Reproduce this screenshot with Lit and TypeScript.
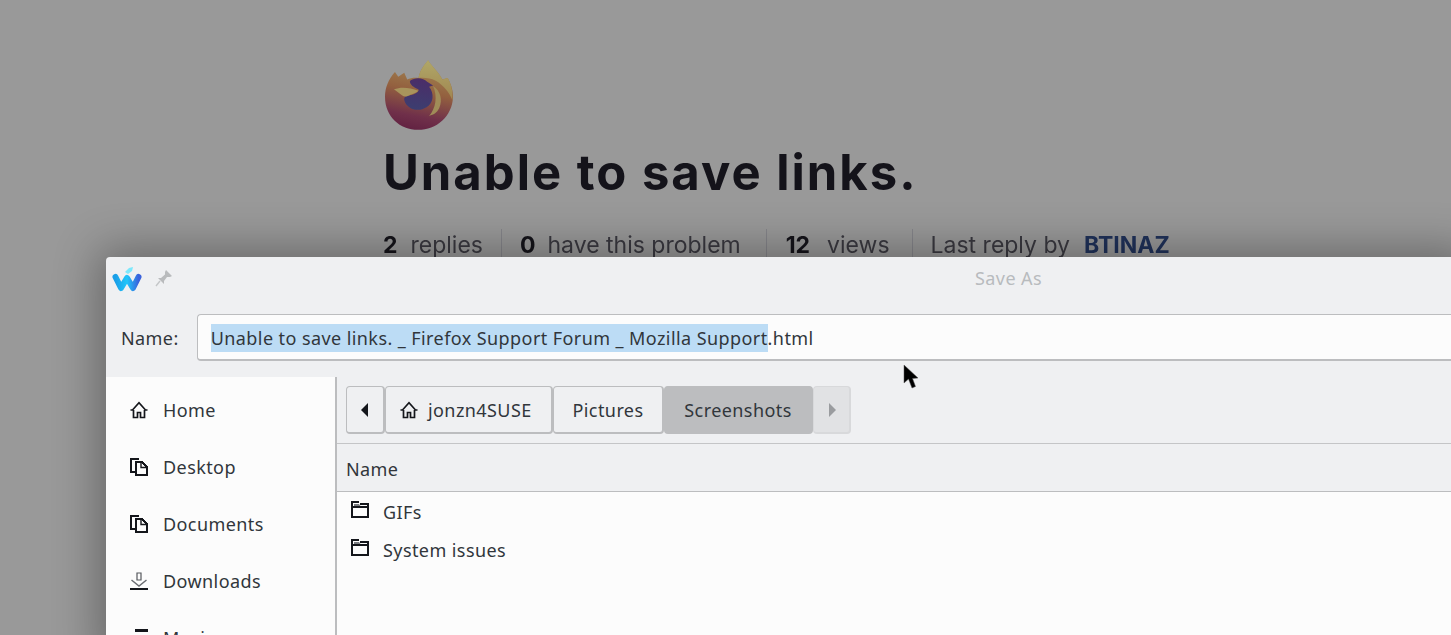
import { LitElement, html, css, svg } from "lit";
import { customElement } from "lit/decorators.js";

const homeIcon = svg`<path d="M0.500 9 H2.500 L9 1.800 L15.500 9 H17.500 M3.500 9 V16.500 H7.500 V11.500 H10.500 V16.500 H14.500 V9" fill="none" stroke="#14161b" stroke-width="1.700"/>`;
const docIcon = svg`<g shape-rendering="crispEdges"><path d="M6 14 H1 V1 H9" fill="none" stroke="#14161b" stroke-width="2"/><path d="M6 3.500 H11.500 L17 9 V17 H6 Z" fill="none" stroke="#14161b" stroke-width="2"/></g><path d="M11 4 V9.500 H16.500" fill="none" stroke="#14161b" stroke-width="1.400"/>`;
const dlIcon = svg`<path d="M7 1 H11 V8 H7 Z" fill="none" stroke="#55585d" stroke-width="1.200"/><path d="M1.500 8 L9 14 L16.500 8" fill="none" stroke="#6a6d72" stroke-width="1.500"/><path d="M0 17 H18" stroke="#14161b" stroke-width="2" shape-rendering="crispEdges"/>`;
const folderIcon = svg`<g shape-rendering="crispEdges"><path d="M1 6 H17 V16 H1 Z M1 6 V1 H8 M17 6 V3 H9" fill="none" stroke="#14161b" stroke-width="2"/></g><path d="M3 3 H8 L9.500 5 H3 Z" fill="#7a7c80"/>`;
const musicIcon = svg`<path d="M5 0 H18 V3 H5 Z" fill="#14161b"/>`;

@customElement("app-root")
export class AppRoot extends LitElement {
  static styles = css`
    :host {
      display: block;
      width: 1451px;
      height: 635px;
      overflow: hidden;
      position: relative;
      background: #999999;
      font-family: "Noto Sans", sans-serif;
    }
    .page {
      padding: 60px 0 0 383px;
      color: #15141a;
      filter: blur(0.35px);
    }
    .logo { display: block; width: 68px; height: 70px; margin-left: 2px; }
    h1 {
      margin: 11px 0 0;
      font: 700 49px/64px "Inter", sans-serif;
      letter-spacing: 2px;
      white-space: nowrap;
      color: #14131a;
    }
    .stats {
      display: flex;
      margin-top: 24px;
      font: 400 23px/32px "Inter", sans-serif;
      color: #3a3940;
      white-space: nowrap;
    }
    .stat {
      padding-right: 18px;
      margin-right: 18px;
      border-right: 1px solid #85858a;
    }
    .stat:nth-child(2) { padding-right: 25px; margin-right: 19px; }
    .stat:nth-child(3) { padding-right: 22px; }
    .stat:last-child { border: 0; }
    .stat b { color: #15141a; font-weight: 700; margin-right: 13px; }
    .stat:nth-child(2) b { margin-right: 12px; }
    .stat:nth-child(3) b { margin-right: 17px; }
    .stat .user { color: #20325a; margin-left: 14px; margin-right: 0; }

    .window {
      position: absolute;
      left: 106px;
      top: 257px;
      width: 1360px;
      height: 400px;
      background: #eff0f2;
      border-radius: 4px 4px 0 0;
      box-shadow: 0 0 45px 8px rgba(0, 0, 0, 0.32);
      color: #31363b;
      font-size: 18px;
      letter-spacing: 0.42px;
    }
    .titlebar {
      height: 44px;
      display: flex;
      align-items: center;
      padding-left: 6px;
      position: relative;
    }
    .titlebar svg { display: block; }
    .pin { margin-left: 13px; margin-top: -2px; }
    .wintitle {
      position: absolute;
      left: 869px;
      top: 9px;
      color: #b8bbbe;
      font-size: 18px;
      line-height: 25px;
    }
    .namerow {
      height: 76px;
      display: flex;
      align-items: flex-start;
      padding-left: 15px;
    }
    .namerow label { line-height: 74px; margin-right: 18px; }
    .field {
      margin-top: 13px;
      flex: 1;
      height: 47px;
      box-sizing: border-box;
      background: #fcfcfc;
      border: 1px solid #bcbdbf;
      border-right: 0;
      border-bottom-width: 2px;
      border-radius: 4px 0 0 4px;
      padding: 9px 0 0 13px;
      line-height: 28px;
      white-space: nowrap;
    }
    .sel { background: #bcdcf5; display: inline-block; }
    .body { display: flex; height: 280px; }
    .side {
      width: 205px;
      background: #fcfcfc;
      border-right: 2px solid #bcbdbf;
      padding: 4px 0 0 24px;
      flex: none;
    }
    .place {
      display: flex;
      align-items: center;
      gap: 15px;
      height: 57px;
    }
    .place svg { width: 18px; height: 18px; flex: none; }
    .main { flex: 1; display: flex; flex-direction: column; }
    .crumbs {
      height: 67px;
      flex: none;
      display: flex;
      align-items: center;
      box-sizing: border-box;
      padding: 0 0 0 9px;
      border-bottom: 1px solid #c4c5c7;
    }
    .btn {
      height: 48px;
      box-sizing: border-box;
      border: 1px solid #bcbdbf;
      border-bottom-width: 2px;
      border-right-width: 2px;
      border-radius: 4px;
      display: flex;
      align-items: center;
      justify-content: center;
      background: #eff0f2;
      flex: none;
    }
    .arrow { width: 39px; }
    .home { width: 168px; justify-content: flex-start; padding-left: 14px; gap: 10px; }
    .pics { width: 111px; }
    .shots { width: 149px; background: #bcbdbf; border-color: #bcbdbf; }
    .next { width: 38px; background: #e1e2e4; border-color: #d8d9db; }
    .btn svg { display: block; }
    .head {
      height: 48px;
      flex: none;
      box-sizing: border-box;
      border-bottom: 1px solid #bcbdbf;
      padding-left: 9px;
      line-height: 50px;
    }
    .list { flex: 1; background: #fcfcfc; padding-top: 1px; }
    .row {
      display: flex;
      align-items: center;
      gap: 14px;
      height: 38px;
      padding-left: 14px;
    }
    .row svg { width: 18px; height: 18px; margin-top: -4px; flex: none; }
    .cursor { position: absolute; left: 903px; top: 364px; width: 17px; height: 25px; }
  `;

  render() {
    return html`
      <div class="page">
        <svg class="logo" viewBox="45 30 205 210" aria-hidden="true">
          <defs>
            <linearGradient id="fx" x1="0.6" y1="0" x2="0.4" y2="1">
              <stop offset="0" stop-color="#a38b55"/>
              <stop offset="0.45" stop-color="#93603f"/>
              <stop offset="0.8" stop-color="#70304a"/>
              <stop offset="1" stop-color="#622242"/>
            </linearGradient>
            <linearGradient id="glb" x1="0.5" y1="0" x2="0.4" y2="1">
              <stop offset="0" stop-color="#4b2d68"/>
              <stop offset="1" stop-color="#3c3e70"/>
            </linearGradient>
            <linearGradient id="fl" x1="0.5" y1="0" x2="0.5" y2="1">
              <stop offset="0" stop-color="#b0a768"/>
              <stop offset="1" stop-color="#a08650"/>
            </linearGradient>
          </defs>
          <path d="M175 30 C185 48 205 62 218 88 L234 84 C246 105 250 125 250 140 C248 200 200 240 145 240 C90 240 45 200 45 140 C45 115 55 88 75 66 L85 80 L103 68 L112 88 C122 84 135 82 146 84 C150 62 160 48 175 30 Z" fill="url(#fx)"/>
          <path d="M175 30 C185 48 205 62 218 88 L234 84 C246 105 250 125 248 150 C240 130 222 105 198 92 C182 84 162 82 146 84 C150 62 160 48 175 30 Z" fill="url(#fl)"/>
          <path d="M190 108 C212 122 220 150 208 176 C200 190 192 194 178 198 C198 176 204 140 190 108 Z" fill="#a08c58"/>
          <path d="M120 93 C135 80 160 82 172 95 L190 106 L178 110 C194 130 192 160 170 172 C145 188 110 178 103 150 C102 140 110 136 125 135 C140 132 150 122 145 118 C132 112 120 105 120 93 Z" fill="url(#glb)"/>
          <path d="M72 118 C92 110 118 112 146 122 C136 130 128 132 122 134 C112 140 104 142 96 136 C88 130 80 124 72 118 Z" fill="#a8945c"/>
        </svg>
        <h1>Unable to save links.</h1>
        <div class="stats">
          <span class="stat"><b>2</b>replies</span>
          <span class="stat"><b>0</b>have this problem</span>
          <span class="stat"><b>12</b>views</span>
          <span class="stat">Last reply by<b class="user">BTINAZ</b></span>
        </div>
      </div>

      <div class="window">
        <div class="titlebar">
          <svg width="30" height="26" viewBox="0 0 30 26" aria-hidden="true">
            <defs>
              <linearGradient id="w" x1="0" y1="0" x2="1" y2="0">
                <stop offset="0" stop-color="#1a9fe8"/>
                <stop offset="0.5" stop-color="#20c6fa"/>
                <stop offset="1" stop-color="#3a62dc"/>
              </linearGradient>
            </defs>
            <path d="M3.500 11 L9 22 L15 12 L21 22 L26.500 11" fill="none" stroke="url(#w)" stroke-width="6" stroke-linecap="round" stroke-linejoin="round"/>
            <path d="M13 6 L17 2 L21 1 L20 5 L16 8 Z" fill="#7ce8fc"/>
          </svg>
          <svg class="pin" width="18" height="18" viewBox="0 0 18 18" aria-hidden="true">
            <path d="M11 1 L17 7 L15 8 L12 8 L9 12 L9 15 L3 9 L6 9 L10 5.500 L10 3 Z" fill="#b9bbbd"/>
            <path d="M5 12 L1 17" stroke="#c4c6c8" stroke-width="1.400"/>
          </svg>
          <span class="wintitle">Save As</span>
        </div>
        <div class="namerow">
          <label>Name:</label>
          <div class="field"><span class="sel">Unable to save links. _ Firefox Support Forum _ Mozilla Support</span>.html</div>
        </div>
        <div class="body">
          <div class="side">
            <div class="place"><svg viewBox="0 0 18 18">${homeIcon}</svg>Home</div>
            <div class="place"><svg viewBox="0 0 18 18">${docIcon}</svg>Desktop</div>
            <div class="place"><svg viewBox="0 0 18 18">${docIcon}</svg>Documents</div>
            <div class="place"><svg viewBox="0 0 18 18">${dlIcon}</svg>Downloads</div>
            <div class="place"><svg viewBox="0 0 18 18">${musicIcon}</svg>Music</div>
          </div>
          <div class="main">
            <div class="crumbs">
              <div class="btn arrow">
                <svg width="8" height="14" viewBox="0 0 8 14"><path d="M7 0 V14 L0 7 Z" fill="#14161b"/></svg>
              </div>
              <div class="btn home">
                <svg width="18" height="18" viewBox="0 0 18 18">${homeIcon}</svg>
                <span>jonzn4SUSE</span>
              </div>
              <div class="btn pics">Pictures</div>
              <div class="btn shots">Screenshots</div>
              <div class="btn next">
                <svg width="8" height="14" viewBox="0 0 8 14"><path d="M1 0 V14 L8 7 Z" fill="#9a9c9f"/></svg>
              </div>
            </div>
            <div class="head">Name</div>
            <div class="list">
              <div class="row"><svg viewBox="0 0 18 18">${folderIcon}</svg>GIFs</div>
              <div class="row"><svg viewBox="0 0 18 18">${folderIcon}</svg>System issues</div>
            </div>
          </div>
        </div>
      </div>

      <svg class="cursor" viewBox="0 0 17 25" aria-hidden="true">
        <path d="M1 1 L1 19 L5.500 15 L9 24 L12.500 22.500 L9.500 14.500 L15 14 Z" fill="#000" stroke="#555" stroke-width="0.500"/>
      </svg>
    `;
  }
}
